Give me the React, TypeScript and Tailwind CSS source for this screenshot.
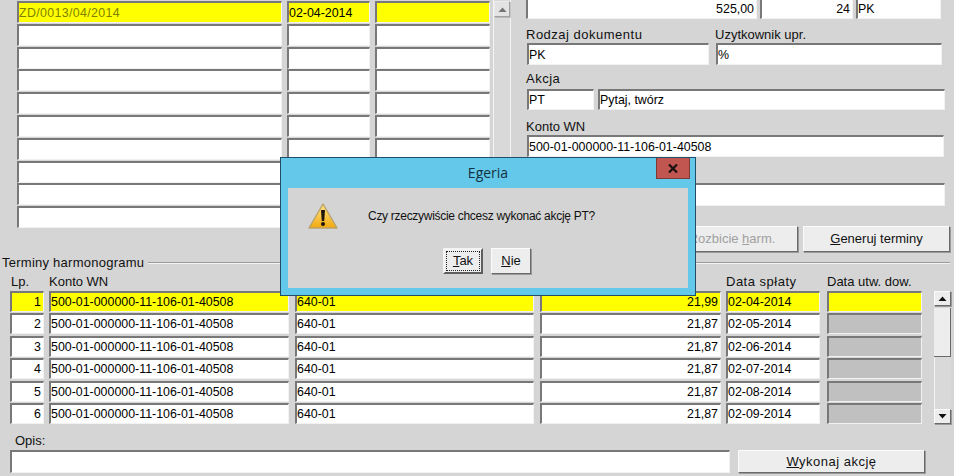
const font = { fontFamily: '"Liberation Sans", Arial, sans-serif' };

type FieldProps = {
  className?: string;
  text?: string;
  right?: boolean;
  cut?: boolean;
};

// sunken windows style edit box
const Field = ({ className = "", text = "", right = false, cut = false }: FieldProps) => (
  <div
    className={`flex items-center overflow-hidden whitespace-nowrap border-l-2 border-r border-b border-l-[#787878] border-r-[#f2f2f2] border-b-[#f2f2f2] pr-[2px] text-[12.4px] text-black ${
      cut ? "" : "border-t-2 border-t-[#787878]"
    } ${right ? "justify-end" : ""} ${className}`}
  >
    {text}
  </div>
);

const WinButton = ({ className = "", children }: { className?: string; children: React.ReactNode }) => (
  <div
    className={`flex items-center justify-center border border-t-[#fbfbfb] border-l-[#fbfbfb] border-r-[#6a6a6a] border-b-[#6a6a6a] bg-[#ededed] text-[13px] shadow-[1px_1px_0_#9a9a9a] ${className}`}
  >
    {children}
  </div>
);

const Arrow = ({ up }: { up?: boolean }) => (
  <svg width="9" height="5" viewBox="0 0 9 5">
    <path d={up ? "M0.5 5 L4.5 0.5 L8.5 5 Z" : "M0.5 0 L4.5 4.5 L8.5 0 Z"} fill="#111" />
  </svg>
);

const topRows = [0, 1, 2, 3, 4, 5, 6, 7, 8, 9];

const scheduleRows = [
  { lp: "1", amount: "21,99", date: "02-04-2014" },
  { lp: "2", amount: "21,87", date: "02-05-2014" },
  { lp: "3", amount: "21,87", date: "02-06-2014" },
  { lp: "4", amount: "21,87", date: "02-07-2014" },
  { lp: "5", amount: "21,87", date: "02-08-2014" },
  { lp: "6", amount: "21,87", date: "02-09-2014" },
];

export default function App() {
  return (
    <div
      className="relative flex h-[476px] w-[954px] flex-col overflow-hidden bg-[#d5d5d5] text-[13px] leading-[16px] text-[#111]"
      style={font}
    >
      {/* upper part */}
      <div className="flex h-[255px] items-start">
        <div className="ml-[17px] mt-px flex w-[473px] flex-col gap-[0.8px]">
          {topRows.map((row) => {
            const bg = row === 0 ? "bg-[#ffff00]" : "bg-white";
            return (
              <div key={row} className="flex h-[22px] gap-[5px]">
                <Field
                  className={`w-[265px] ${bg} tracking-[0.35px] !text-[#808000]`}
                  text={row === 0 ? "ZD/0013/04/2014" : ""}
                />
                <Field className={`w-[83px] ${bg}`} text={row === 0 ? "02-04-2014" : ""} />
                <Field className={`w-[115px] ${bg}`} />
              </div>
            );
          })}
        </div>

        <div className="ml-[3px] flex h-[228px] w-[18px] flex-col items-center border-x border-[#f4f4f4] bg-[#d9d9d9]">
          <WinButton className="mt-px h-[16px] w-[16px] opacity-50">
            <Arrow up />
          </WinButton>
        </div>

        <div className="ml-[15px] flex w-[425px] flex-col">
          <div className="flex h-[19px]">
            <Field cut right className="w-[231px] bg-white" text="525,00" />
            <Field cut right className="ml-[3px] w-[93px] bg-white" text="24" />
            <Field cut className="ml-[3px] w-[85px] bg-white" text="PK" />
          </div>

          <div className="mt-[8px] flex h-[16px]">
            <span className="w-[189px] tracking-[0.5px]">Rodzaj dokumentu</span>
            <span>Uzytkownik upr.</span>
          </div>
          <div className="flex h-[22px] pl-px">
            <Field className="w-[182px] bg-white" text="PK" />
            <Field className="ml-[7px] w-[226px] bg-white" text="%" />
          </div>

          <span className="mt-[6px] h-[16px] tracking-[0.5px]">Akcja</span>
          <div className="mt-[2px] flex h-[21px] pl-px">
            <Field className="w-[67px] bg-white" text="PT" />
            <Field className="ml-[4px] w-[347px] bg-white" text="Pytaj, twórz" />
          </div>

          <span className="mt-[9px] h-[16px]">Konto WN</span>
          <Field className="ml-px h-[22px] w-[417px] bg-white" text="500-01-000000-11-106-01-40508" />

          <Field className="ml-px mt-[26px] h-[23px] w-[418px] bg-white" />

          <div className="mt-[20px] flex h-[26px] justify-end gap-[5px]">
            <WinButton className="w-[140px] pl-[8px]">
              <span className="text-[#a0a0a0]">
                Rozbicie <span className="underline">h</span>arm.
              </span>
            </WinButton>
            <WinButton className="mr-px w-[147px]">
              <span>
                <span className="underline">G</span>eneruj terminy
              </span>
            </WinButton>
          </div>
        </div>
      </div>

      {/* group header */}
      <div className="flex h-[16px] items-center pl-[2px]">
        <span className="tracking-[0.25px]">Terminy harmonogramu</span>
        <div className="ml-[4px] mr-[4px] h-[2px] flex-1 border-t border-b border-t-[#9a9a9a] border-b-[#f4f4f4]" />
      </div>

      <div className="mt-[3px] flex h-[16px]">
        <span className="ml-[11px] w-[38px]">Lp.</span>
        <span className="w-[677px]">Konto WN</span>
        <span className="w-[101px] tracking-[0.5px]">Data spłaty</span>
        <span>Data utw. dow.</span>
      </div>

      {/* schedule */}
      <div className="mt-px flex h-[134px]">
        <div className="ml-[10px] flex w-[912px] flex-col gap-[1.4px]">
          {scheduleRows.map((row, i) => {
            const bg = i === 0 ? "bg-[#ffff00]" : "bg-white";
            return (
              <div key={row.lp} className="flex h-[21px]">
                <Field right className={`w-[34px] ${bg}`} text={row.lp} />
                <Field className={`ml-[5px] w-[240px] ${bg}`} text="500-01-000000-11-106-01-40508" />
                <Field className={`ml-[6px] w-[239px] ${bg}`} text="640-01" />
                <Field right className={`ml-[6px] w-[181px] ${bg}`} text={row.amount} />
                <Field className={`ml-[5px] w-[94px] ${bg}`} text={row.date} />
                <Field className={`ml-[7px] w-[95px] ${i === 0 ? "bg-[#ffff00]" : "bg-[#c0c0c0]"}`} />
              </div>
            );
          })}
        </div>

        <div className="ml-[12px] flex h-[133px] w-[17px] flex-col bg-[#d9d9d9]">
          <WinButton className="h-[15px] w-[17px]">
            <Arrow up />
          </WinButton>
          <div className="mt-[2px] h-[49px] w-[17px] border-b border-r border-b-[#6a6a6a] border-r-[#6a6a6a] bg-[#ededed]" />
          <div className="flex-1 border-l border-[#f2f2f2]" />
          <WinButton className="h-[15px] w-[17px]">
            <Arrow />
          </WinButton>
        </div>
      </div>

      <span className="ml-[15px] mt-[8px] h-[16px]">Opis:</span>
      <div className="mt-px flex h-[23px]">
        <Field className="ml-[10px] w-[720px] bg-white" />
        <WinButton className="ml-[8px] w-[187px] tracking-[0.5px]">
          <span>
            <span className="underline">W</span>ykonaj akcję
          </span>
        </WinButton>
      </div>

      {/* message box */}
      <div className="absolute left-[280px] top-[157px] flex h-[139px] w-[416px] flex-col border border-[#1f4f68] bg-[#63c8ea] px-[7px] pb-[7px]">
        <div
          className="flex h-[30px] items-center justify-center text-[14px] text-[#12303f]"
          style={{ fontFamily: '"Open Sans", "Noto Sans", sans-serif' }}
        >
          Egeria
        </div>
        <div className="absolute right-[5px] top-0 flex h-[21px] w-[34px] items-center justify-center border border-[#7d3a36] border-t-0 bg-[#c0564f]">
          <svg width="10" height="9" viewBox="0 0 10 9">
            <path d="M1 0.5 L9 8.5 M9 0.5 L1 8.5" stroke="#1b1111" strokeWidth="2.2" />
          </svg>
        </div>

        <div className="flex flex-1 flex-col bg-[#d4d4d4]">
          <div className="flex items-start pl-[19px] pt-[14px]">
            <svg width="32" height="28" viewBox="0 0 32 28">
              <defs>
                <linearGradient id="warn" x1="0" y1="0" x2="0" y2="1">
                  <stop offset="0" stopColor="#ffe88a" />
                  <stop offset="1" stopColor="#f2a80c" />
                </linearGradient>
              </defs>
              <path d="M16 2 L30 26 H2 Z" fill="url(#warn)" stroke="#b9a26a" strokeWidth="1.4" strokeLinejoin="round" />
              <path d="M14 8 H18 L17.2 19 H14.8 Z" fill="#1c1508" />
              <circle cx="16" cy="22" r="2" fill="#1c1508" />
            </svg>
            <span className="ml-[29px] mt-[6px] text-[12px] tracking-[-0.29px]">
              Czy rzeczywiście chcesz wykonać akcję PT?
            </span>
          </div>
          <div className="mt-[18px] flex justify-center gap-[8px] pr-[2px]">
            <div className="flex h-[26px] w-[40px] items-center justify-center border-2 border-t-[#f4f4f4] border-l-[#f4f4f4] border-r-[#5e5e5e] border-b-[#5e5e5e] bg-[#ededed] p-px">
              <div className="flex h-full w-full items-center justify-center border border-dotted border-[#222]">
                <span>
                  <span className="underline">T</span>ak
                </span>
              </div>
            </div>
            <WinButton className="h-[26px] w-[40px]">
              <span>
                <span className="underline">N</span>ie
              </span>
            </WinButton>
          </div>
        </div>
      </div>
    </div>
  );
}
